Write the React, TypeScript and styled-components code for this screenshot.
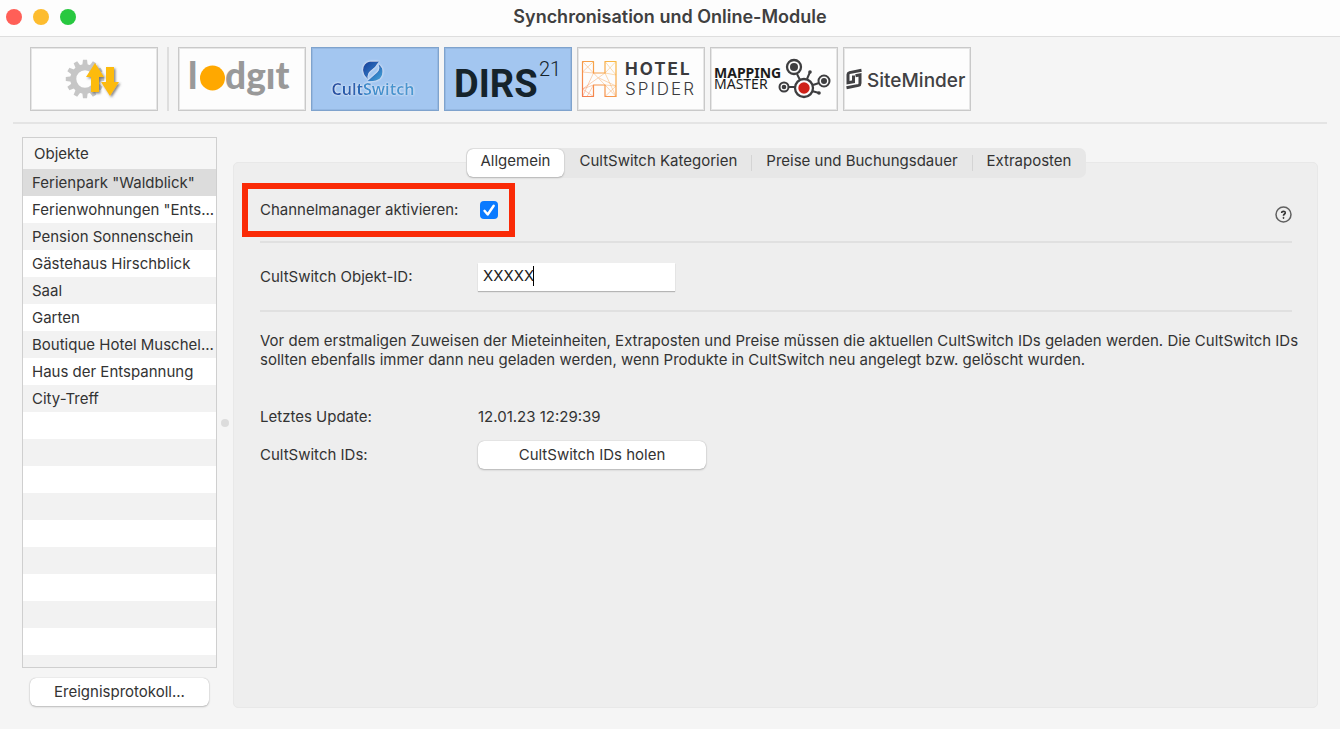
import React, { useState } from "react";
import styled, { createGlobalStyle } from "styled-components";

const GlobalStyle = createGlobalStyle`
  *, *::before, *::after { box-sizing: border-box; }
  body {
    margin: 0;
    background: #f5f5f5;
    color: #333;
    font: 15px/20px Inter, "Liberation Sans", sans-serif;
  }
  button, input { font: inherit; color: inherit; }
`;

const Window = styled.div`
  display: flex;
  flex-direction: column;
  min-height: 100vh;
  background: #f5f5f5;
`;

const TitleBar = styled.header`
  display: grid;
  grid-template-columns: 1fr auto 1fr;
  align-items: center;
  height: 37px;
  padding: 0 6px 2px;
  background: #fdfdfd;
  border-bottom: 1px solid #dedede;
`;

const TrafficLights = styled.div`
  display: flex;
  gap: 11px;
`;

const Light = styled.button<{ $color: string }>`
  width: 16px;
  height: 16px;
  padding: 0;
  border: 0;
  border-radius: 50%;
  background: ${(p) => p.$color};
`;

const Title = styled.h1`
  margin: 0;
  font-size: 18px;
  line-height: 24px;
  font-weight: 600;
  color: #404040;
`;

const Toolbar = styled.nav`
  display: flex;
  flex-wrap: wrap;
  gap: 5px;
  margin: 0 13px;
  padding: 10px 17px 11px;
  border-bottom: 2px solid #e4e4e4;
`;

const ToolButton = styled.button<{ $active?: boolean }>`
  width: 128px;
  height: 64px;
  padding: 0;
  border: 1px solid ${(p) => (p.$active ? "#7fa3cd" : "#c9c9c9")};
  background: ${(p) => (p.$active ? "#a3c6f0" : "#fdfdfd")};
  box-shadow: inset 0 0 0 1px ${(p) => (p.$active ? "#95b8e2" : "#e6e6e6")};

  svg { display: block; }
`;

const ToolSeparator = styled.div`
  width: 2px;
  margin: 0 4px;
  background: #dedede;
`;

const Body = styled.main`
  display: flex;
  flex: 1;
  padding: 13px 22px 21px;
`;

const Sidebar = styled.aside`
  display: flex;
  flex-direction: column;
  flex: none;
  width: 195px;
`;

const ListFrame = styled.div`
  flex: 1;
  border: 1px solid #cfcfcf;
  background: repeating-linear-gradient(#f2f2f2 0 27px, #fff 27px 54px) 0 31px;
`;

const ObjectTable = styled.table`
  width: 100%;
  table-layout: fixed;
  border-collapse: collapse;
`;

const HeadCell = styled.th`
  height: 31px;
  padding: 1px 11px 0;
  background: #f6f6f6;
  text-align: left;
  font-weight: 400;
`;

const ObjectCell = styled.td<{ $selected?: boolean }>`
  height: 27px;
  padding: 0 0 0 9px;
  white-space: nowrap;
  background: ${(p) => (p.$selected ? "#dcdcdc" : "transparent")};
`;

const PushButton = styled.button`
  height: 28px;
  padding: 0 16px;
  border: 0;
  border-radius: 6px;
  background: #fff;
  box-shadow: 0 0 1px rgba(0, 0, 0, 0.3), 0 1px 2px rgba(0, 0, 0, 0.22);
`;

const SidebarFooter = styled.div`
  display: grid;
  padding: 10px 8px 2px;
`;

const Splitter = styled.div`
  display: flex;
  align-items: center;
  justify-content: center;
  flex: none;
  width: 16px;

  &::before {
    content: "";
    width: 8px;
    height: 8px;
    border-radius: 50%;
    background: #dcdcdc;
  }
`;

const Panel = styled.section`
  flex: 1;
  min-width: 0;
  margin-top: 25px;
  padding: 0 25px 26px 26px;
  border: 1px solid #e8e8e8;
  border-radius: 5px;
  background: #eee;
`;

const TabStrip = styled.div`
  display: flex;
  align-items: center;
  width: fit-content;
  height: 30px;
  margin: -15px auto 5px;
  padding: 1px;
  border-radius: 7px;
  background: #e7e7e7;
`;

const Tab = styled.button<{ $active: boolean }>`
  height: 28px;
  padding: 0 14px 4px;
  border: 0;
  border-radius: 6px;
  background: ${(p) => (p.$active ? "#fff" : "transparent")};
  box-shadow: ${(p) => (p.$active ? "0 0 1px rgba(0,0,0,.3), 0 1px 2px rgba(0,0,0,.2)" : "none")};
`;

const TabDivider = styled.span<{ $hidden: boolean }>`
  width: 1px;
  height: 16px;
  background: ${(p) => (p.$hidden ? "transparent" : "#d4d4d4")};
`;

const SettingRow = styled.div`
  display: flex;
  align-items: center;
  justify-content: space-between;
  margin-bottom: 4px;
`;

const Highlight = styled.div`
  display: flex;
  align-items: center;
  height: 54px;
  margin-left: -18px;
  padding: 0 11px 0 12px;
  border: 6px solid #fa2a06;
`;

const FieldLabel = styled.label`
  width: 218px;
  flex: none;
`;

const CheckLabel = styled.label`
  width: 220px;
`;

const Checkbox = styled.input`
  appearance: none;
  width: 18px;
  height: 18px;
  margin: 0;
  border-radius: 4px;
  background: #d0d0d0;

  &:checked {
    background: #0a7aff;
  }
`;

const CheckWrap = styled.span`
  display: grid;

  > * { grid-area: 1 / 1; }
  > svg { z-index: 1; pointer-events: none; }
`;

const HelpButton = styled.button`
  width: 17px;
  height: 17px;
  margin-top: 8px;
  padding: 0;
  border: 0;
  background: none;

  svg { display: block; }
`;

const Rule = styled.hr`
  height: 2px;
  margin: 0;
  border: 0;
  background: #e0e0e0;
`;

const Field = styled.div<{ $height: number }>`
  display: flex;
  align-items: center;
  height: ${(p) => p.$height}px;
`;

const InputWrap = styled.div`
  position: relative;
  width: 197px;
`;

const TextInput = styled.input`
  display: block;
  width: 100%;
  height: 28px;
  padding: 0 5px 2px;
  border: 0;
  outline: none;
  background: #fff;
  box-shadow: 0 1px 1px rgba(0, 0, 0, 0.24);
  color: #222;
  caret-color: transparent;
`;

const Caret = styled.span`
  position: absolute;
  left: 55px;
  top: 3px;
  width: 1px;
  height: 20px;
  background: #000;
`;

const Note = styled.p`
  margin: 19px -10px 38px 0;
  line-height: 19px;
`;

const FetchButton = styled(PushButton)`
  width: 228px;
`;

const teeth = Array.from({ length: 12 }, (_, i) => i * 30);

const SyncLogo = () => (
  <svg width="126" height="62" viewBox="0 0 126 62" aria-label="Synchronisation">
    <defs>
      <filter id="arrowShadow" x="-20%" y="-20%" width="160%" height="160%">
        <feDropShadow dx="1.5" dy="1.5" stdDeviation="1" floodColor="#555" floodOpacity="0.7" />
      </filter>
    </defs>
    <g fill="#c6c6c6">
      {teeth.map((a) => (
        <path key={a} d="M51.2 18 L52 11.8 H56 L56.8 18 Z" transform={`rotate(${a} 54 31)`} />
      ))}
    </g>
    <circle cx="54" cy="31" r="11.7" fill="none" stroke="#c6c6c6" strokeWidth="6" />
    <g fill="#fdbb0b" filter="url(#arrowShadow)">
      <path d="M64 15 L73 29 H68 V44 H60 V29 H55 Z" />
      <path d="M75 19 H83 V34 H88 L79 48 L70 34 H75 Z" />
    </g>
  </svg>
);

const LodgitLogo = () => (
  <svg width="126" height="62" viewBox="0 0 126 62" aria-label="lodgit">
    <g fontFamily="Lato, sans-serif" fontWeight="900" fontSize="37" fill="#999">
      <text x="9" y="41">l</text>
      <text x="46" y="41">dgıt</text>
    </g>
    <circle cx="33.5" cy="30" r="12.5" fill="#ffa800" />
  </svg>
);

const CultSwitchLogo = () => (
  <svg width="126" height="62" viewBox="0 0 126 62" aria-label="CultSwitch">
    <defs>
      <linearGradient id="cultWord" x1="0" x2="1">
        <stop offset="0" stopColor="#1f4fa3" />
        <stop offset="0.38" stopColor="#2d6db9" />
        <stop offset="0.4" stopColor="#3f8fcd" />
        <stop offset="1" stopColor="#4a9ad2" />
      </linearGradient>
      <linearGradient id="cultMark" gradientUnits="userSpaceOnUse" x1="52" y1="14" x2="70" y2="33">
        <stop offset="0" stopColor="#17439b" />
        <stop offset="0.45" stopColor="#2a68b8" />
        <stop offset="1" stopColor="#42a5d8" />
      </linearGradient>
      <filter id="glow" x="-20%" y="-40%" width="140%" height="180%">
        <feDropShadow dx="0" dy="0" stdDeviation="1.2" floodColor="#fff" floodOpacity="1" />
      </filter>
    </defs>
    <g filter="url(#glow)">
      <path
        d="M67 13.500 H58 Q51 15 51 22 Q51 27 56 31 Q54.500 26 59 22.500 Q63.500 19.500 67 13.500 Z"
        fill="url(#cultMark)"
      />
      <path
        d="M55.500 33 Q63 33.800 67.500 31 Q71.300 27 70.500 22 Q70 18.500 66.500 16.500 Q68.500 21 65 24.500 Q61 28 55.500 33 Z"
        fill="url(#cultMark)"
      />
      <text
        x="61"
        y="47"
        textAnchor="middle"
        fontFamily="'Noto Sans', sans-serif"
        fontWeight="600"
        fontSize="16"
        fill="url(#cultWord)"
      >
        CultSwitch
      </text>
    </g>
  </svg>
);

const DirsLogo = () => (
  <svg width="126" height="62" viewBox="0 0 126 62" aria-label="DIRS21">
    <g fontFamily="Roboto, sans-serif" fill="#15232b">
      <text x="9" y="49" fontWeight="700" fontSize="38">DIRS</text>
      <text x="94" y="28" fontWeight="300" fontSize="20">21</text>
    </g>
  </svg>
);

const SpiderLogo = () => (
  <svg width="126" height="62" viewBox="0 0 126 62" aria-label="Hotel Spider">
    <defs>
      <linearGradient id="web" x1="0" y1="1" x2="1" y2="0">
        <stop offset="0" stopColor="#f47b4f" />
        <stop offset="1" stopColor="#f9bb45" />
      </linearGradient>
    </defs>
    <g fill="none" stroke="url(#web)" strokeLinejoin="round">
      <path strokeWidth="1.2" d="M4.500 13.500 H15.500 V25 H27 V13.500 H38 V48.500 H27 V37 H15.500 V48.500 H4.500 Z" />
      <path
        strokeWidth="0.6"
        opacity="0.7"
        d="M15.500 13.500 L4.500 24 L15.500 25 L27 37 L38 48.500 M38 13.500 L27 25 L4.500 41 M4.500 13.500 L15.500 25 M27 13.500 L38 27 L27 25 M15.500 25 L4.500 48.500 M15.500 37 L4.500 41 L15.500 48.500 M21 30 L38 38 L27 48.500 M27 37 L38 38 M15.500 37 L9 48.500 M27 25 L38 48.500"
      />
    </g>
    <g fontFamily="Inter, sans-serif" fontSize="17" letterSpacing="2" fill="#3b3b3d">
      <text x="47" y="27" fontWeight="700">HOTEL</text>
      <text x="47" y="47" fontWeight="300">SPIDER</text>
    </g>
  </svg>
);

const MappingLogo = () => (
  <svg width="126" height="62" viewBox="0 0 126 62" aria-label="Mapping Master">
    <g fontFamily="'Noto Sans', sans-serif" fontSize="14" fill="#1c1c1c">
      <text x="3" y="30" fontWeight="700">MAPPING</text>
      <text x="3" y="41">MASTER</text>
    </g>
    <g stroke="#3e3e40" strokeWidth="2" fill="none">
      <path d="M86 26 L89 32 M78 39 H84 M102 37 L108 35 M96 31 L99 24 M101 43 L108 45" />
      <circle cx="83" cy="19" r="7" strokeWidth="2.300" />
      <circle cx="93" cy="40" r="9" strokeWidth="2.300" />
      <circle cx="113" cy="33" r="5.500" />
      <circle cx="73" cy="39" r="4.500" />
    </g>
    <g fill="#3e3e40">
      <circle cx="83" cy="19" r="4" />
      <circle cx="113" cy="33" r="3" />
      <circle cx="73" cy="39" r="2.300" />
      <circle cx="99" cy="24" r="1.800" />
      <circle cx="108" cy="45" r="1.800" />
    </g>
    <circle cx="93" cy="40" r="5.700" fill="#cf2118" />
  </svg>
);

const SiteMinderLogo = () => (
  <svg width="126" height="62" viewBox="0 0 126 62" aria-label="SiteMinder">
    <g fill="none" stroke="#414144" strokeWidth="3">
      <path d="M17.500 22.300 L5.500 24.600 Q4 25 4 26.500 V34.800 L9.500 33.800 V27.500" />
      <path d="M11.500 27.700 L16 26.800 V35.300 Q16 37 14.500 37.400 L2.500 39.700" />
    </g>
    <text x="23" y="39" fontFamily="Inter, sans-serif" fontWeight="500" fontSize="19" fill="#414144">
      SiteMinder
    </text>
  </svg>
);

const objects = [
  'Ferienpark "Waldblick"',
  'Ferienwohnungen "Ents...',
  "Pension Sonnenschein",
  "Gästehaus Hirschblick",
  "Saal",
  "Garten",
  "Boutique Hotel Muschel...",
  "Haus der Entspannung",
  "City-Treff",
];

const tabs = ["Allgemein", "CultSwitch Kategorien", "Preise und Buchungsdauer", "Extraposten"];

export default function App() {
  const [tab, setTab] = useState(0);
  const [selected, setSelected] = useState(0);
  const [enabled, setEnabled] = useState(true);
  const [objectId, setObjectId] = useState("XXXXX");

  return (
    <Window>
      <GlobalStyle />
      <TitleBar>
        <TrafficLights>
          <Light $color="#ff5f57" aria-label="Schließen" />
          <Light $color="#fdbc2e" aria-label="Minimieren" />
          <Light $color="#28c840" aria-label="Vergrößern" />
        </TrafficLights>
        <Title>Synchronisation und Online-Module</Title>
      </TitleBar>

      <Toolbar>
        <ToolButton><SyncLogo /></ToolButton>
        <ToolSeparator />
        <ToolButton><LodgitLogo /></ToolButton>
        <ToolButton $active><CultSwitchLogo /></ToolButton>
        <ToolButton $active><DirsLogo /></ToolButton>
        <ToolButton><SpiderLogo /></ToolButton>
        <ToolButton><MappingLogo /></ToolButton>
        <ToolButton><SiteMinderLogo /></ToolButton>
      </Toolbar>

      <Body>
        <Sidebar>
          <ListFrame>
            <ObjectTable>
              <thead>
                <tr><HeadCell scope="col">Objekte</HeadCell></tr>
              </thead>
              <tbody>
                {objects.map((name, i) => (
                  <tr key={name} onClick={() => setSelected(i)}>
                    <ObjectCell $selected={i === selected}>{name}</ObjectCell>
                  </tr>
                ))}
              </tbody>
            </ObjectTable>
          </ListFrame>
          <SidebarFooter>
            <PushButton>Ereignisprotokoll...</PushButton>
          </SidebarFooter>
        </Sidebar>

        <Splitter />

        <Panel>
          <TabStrip role="tablist">
            {tabs.map((name, i) => (
              <React.Fragment key={name}>
                {i > 0 && <TabDivider $hidden={i === tab || i - 1 === tab} />}
                <Tab role="tab" aria-selected={i === tab} $active={i === tab} onClick={() => setTab(i)}>
                  {name}
                </Tab>
              </React.Fragment>
            ))}
          </TabStrip>

          <SettingRow>
            <Highlight>
              <CheckLabel htmlFor="enabled">Channelmanager aktivieren:</CheckLabel>
              <CheckWrap>
                <Checkbox
                  id="enabled"
                  type="checkbox"
                  checked={enabled}
                  onChange={(e) => setEnabled(e.target.checked)}
                />
                {enabled && (
                  <svg width="18" height="18" viewBox="0 0 18 18" fill="none" aria-hidden="true">
                    <path
                      d="M4.500 9.800 L7.700 13.500 L13.700 4.700"
                      stroke="#fff"
                      strokeWidth="2.400"
                      strokeLinecap="round"
                      strokeLinejoin="round"
                    />
                  </svg>
                )}
              </CheckWrap>
            </Highlight>
            <HelpButton aria-label="Hilfe">
              <svg width="17" height="17" viewBox="0 0 17 17" fill="none" stroke="#606060">
                <circle cx="8.500" cy="8.500" r="7.500" strokeWidth="1.500" />
                <path d="M6.700 6.900 C6.700 4.700 10.300 4.800 10.200 6.900 C10.100 8.200 8.500 8.200 8.500 9.800" stroke="#333" strokeWidth="1.700" />
                <circle cx="8.500" cy="11.900" r="0.600" stroke="#333" fill="#333" strokeWidth="0.800" />
              </svg>
            </HelpButton>
          </SettingRow>

          <Rule />

          <Field $height={67}>
            <FieldLabel htmlFor="objectId">CultSwitch Objekt-ID:</FieldLabel>
            <InputWrap>
              <TextInput
                id="objectId"
                type="text"
                value={objectId}
                onChange={(e) => setObjectId(e.target.value)}
              />
              <Caret />
            </InputWrap>
          </Field>

          <Rule />

          <Note>
            Vor dem erstmaligen Zuweisen der Mieteinheiten, Extraposten und Preise müssen die aktuellen CultSwitch IDs
            geladen werden. Die CultSwitch IDs sollten ebenfalls immer dann neu geladen werden, wenn Produkte in
            CultSwitch neu angelegt bzw. gelöscht wurden.
          </Note>

          <Field $height={20}>
            <FieldLabel as="span">Letztes Update:</FieldLabel>
            <span>12.01.23 12:29:39</span>
          </Field>
          <Field $height={56}>
            <FieldLabel as="span">CultSwitch IDs:</FieldLabel>
            <FetchButton>CultSwitch IDs holen</FetchButton>
          </Field>
        </Panel>
      </Body>
    </Window>
  );
}
